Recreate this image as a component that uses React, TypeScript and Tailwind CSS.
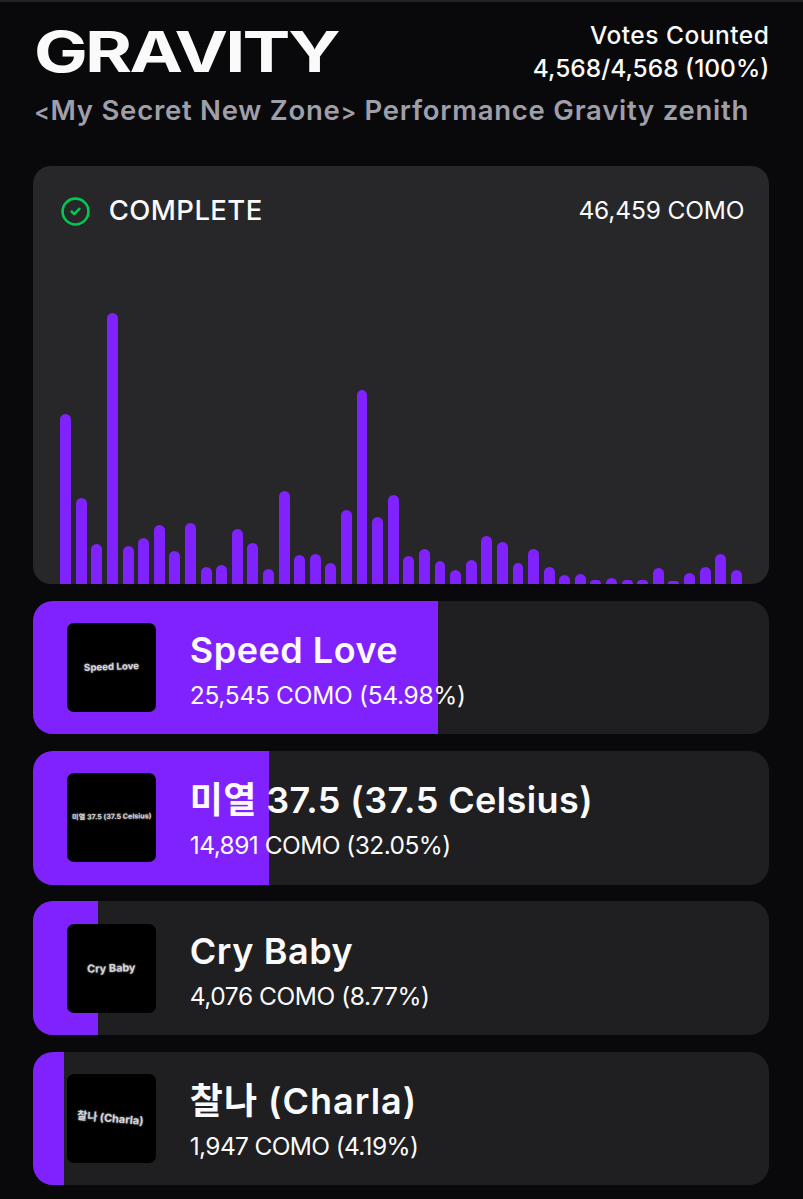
import { CircleCheck } from 'lucide-react'

type Song = {
  name: string
  como: string
  percent: number
  nameClass: string
  comoClass: string
  coverClass: string
}

const songs: Song[] = [
  {
    name: 'Speed Love',
    como: '25,545',
    percent: 54.98,
    nameClass: 'tracking-[0.5px]',
    comoClass: 'tracking-[-0.3px]',
    coverClass: 'text-[9.7px] -rotate-2',
  },
  {
    name: '미열 37.5 (37.5 Celsius)',
    como: '14,891',
    percent: 32.05,
    nameClass: 'tracking-[0.4px]',
    comoClass: 'tracking-[-0.55px]',
    coverClass: 'text-[7.2px] -rotate-1',
  },
  {
    name: 'Cry Baby',
    como: '4,076',
    percent: 8.77,
    nameClass: 'tracking-[0.55px]',
    comoClass: 'tracking-[-0.45px]',
    coverClass: 'text-[10.9px] -rotate-2',
  },
  {
    name: '찰나 (Charla)',
    como: '1,947',
    percent: 4.19,
    nameClass: 'tracking-[1px]',
    comoClass: 'tracking-[-0.65px]',
    coverClass: 'text-[11px] rotate-5 -translate-x-px',
  },
]

// height of each bar in px, oldest first
const votes = [
  169.5, 85.5, 39.5, 270.5, 37.5, 45.5, 59, 33, 60.5, 17, 18.5, 54.5, 41, 14.5, 93,
  28.5, 29.5, 20.5, 73.5, 194, 67, 88.5, 27.5, 34.5, 22.5, 14, 24, 48, 42, 21,
  34.5, 16.5, 8.5, 9.5, 4, 6, 4, 4, 16, 2.5, 10.5, 16.5, 30, 14,
]

function Header() {
  return (
    <header className="h-[164px] pl-px pt-[16.5px]">
      <div className="flex h-[71.5px] items-start justify-between whitespace-nowrap">
        <h1 className="mt-[5px] w-[303px] origin-left scale-x-[1.27] text-[56.5px] font-bold leading-[56px] tracking-[-2.2px]">
          GRAVITY
        </h1>
        <div className="text-right text-[24.5px] font-medium leading-[33.5px]">
          <p className="tracking-[0.5px]">Votes Counted</p>
          <p>4,568/4,568 (100%)</p>
        </div>
      </div>
      <p className="whitespace-nowrap text-[27.5px] font-semibold leading-[41px] tracking-[0.75px] text-[#9f9fa9]">
        <span className="text-[23px]">&lt;</span>My Secret New Zone
        <span className="text-[23px]">&gt;</span> Performance Gravity zenith
      </p>
    </header>
  )
}

function VoteChart() {
  return (
    <section className="flex h-[417.5px] flex-col justify-between overflow-hidden rounded-[18px] bg-[#27272a] px-[27px]">
      <div className="flex h-[90px] items-center justify-between whitespace-nowrap">
        <div className="flex items-center">
          <CircleCheck className="text-[#00c951]" size={31} strokeWidth={2} />
          <span className="mb-[2px] ml-[17.5px] text-[27.5px] font-medium leading-9 tracking-[0.4px]">COMPLETE</span>
        </div>
        <span className="-mr-[2px] mb-[2px] text-[24.5px] leading-9 tracking-[-0.15px]">46,459 COMO</span>
      </div>
      <div className="flex w-[681.7px] items-end gap-[4.7px]">
        {votes.map((height, i) => (
          <div key={i} className="flex-1 rounded-t-full bg-[#7f22fe]" style={{ height }} />
        ))}
      </div>
    </section>
  )
}

function SongRow({ song }: { song: Song }) {
  return (
    <li className="relative h-[133.8px] overflow-hidden rounded-[20px] bg-[#1f1f22]">
      <div className="absolute inset-y-0 left-0 bg-[#7f22fe]" style={{ width: `${song.percent}%` }} />
      <div className="relative flex h-full items-center pl-[33.5px]">
        <div className="flex size-[89px] items-center justify-center overflow-hidden rounded-[7px] bg-black">
          <span
            className={`whitespace-nowrap font-bold text-[#d4d4d8] [text-shadow:0_0_2px_#a1a1aa] ${song.coverClass}`}
          >
            {song.name}
          </span>
        </div>
        <div className="ml-[34px] mt-[11px] whitespace-nowrap">
          <p className={`text-[36px] font-semibold leading-[45px] ${song.nameClass}`}>{song.name}</p>
          <p className={`text-[24.5px] leading-[45px] ${song.comoClass}`}>
            {song.como} COMO ({song.percent}%)
          </p>
        </div>
      </div>
    </li>
  )
}

export default function App() {
  return (
    <main className="h-[1199px] overflow-hidden border-t-2 border-[#232327] bg-[#09090b] pl-[33.3px] pr-[33.7px] font-['Inter','Noto_Sans_CJK_KR',sans-serif] text-[#fafafa]">
      <Header />
      <VoteChart />
      <ul className="mt-[17px] flex flex-col gap-[16.6px]">
        {songs.map((song) => (
          <SongRow key={song.name} song={song} />
        ))}
      </ul>
    </main>
  )
}
